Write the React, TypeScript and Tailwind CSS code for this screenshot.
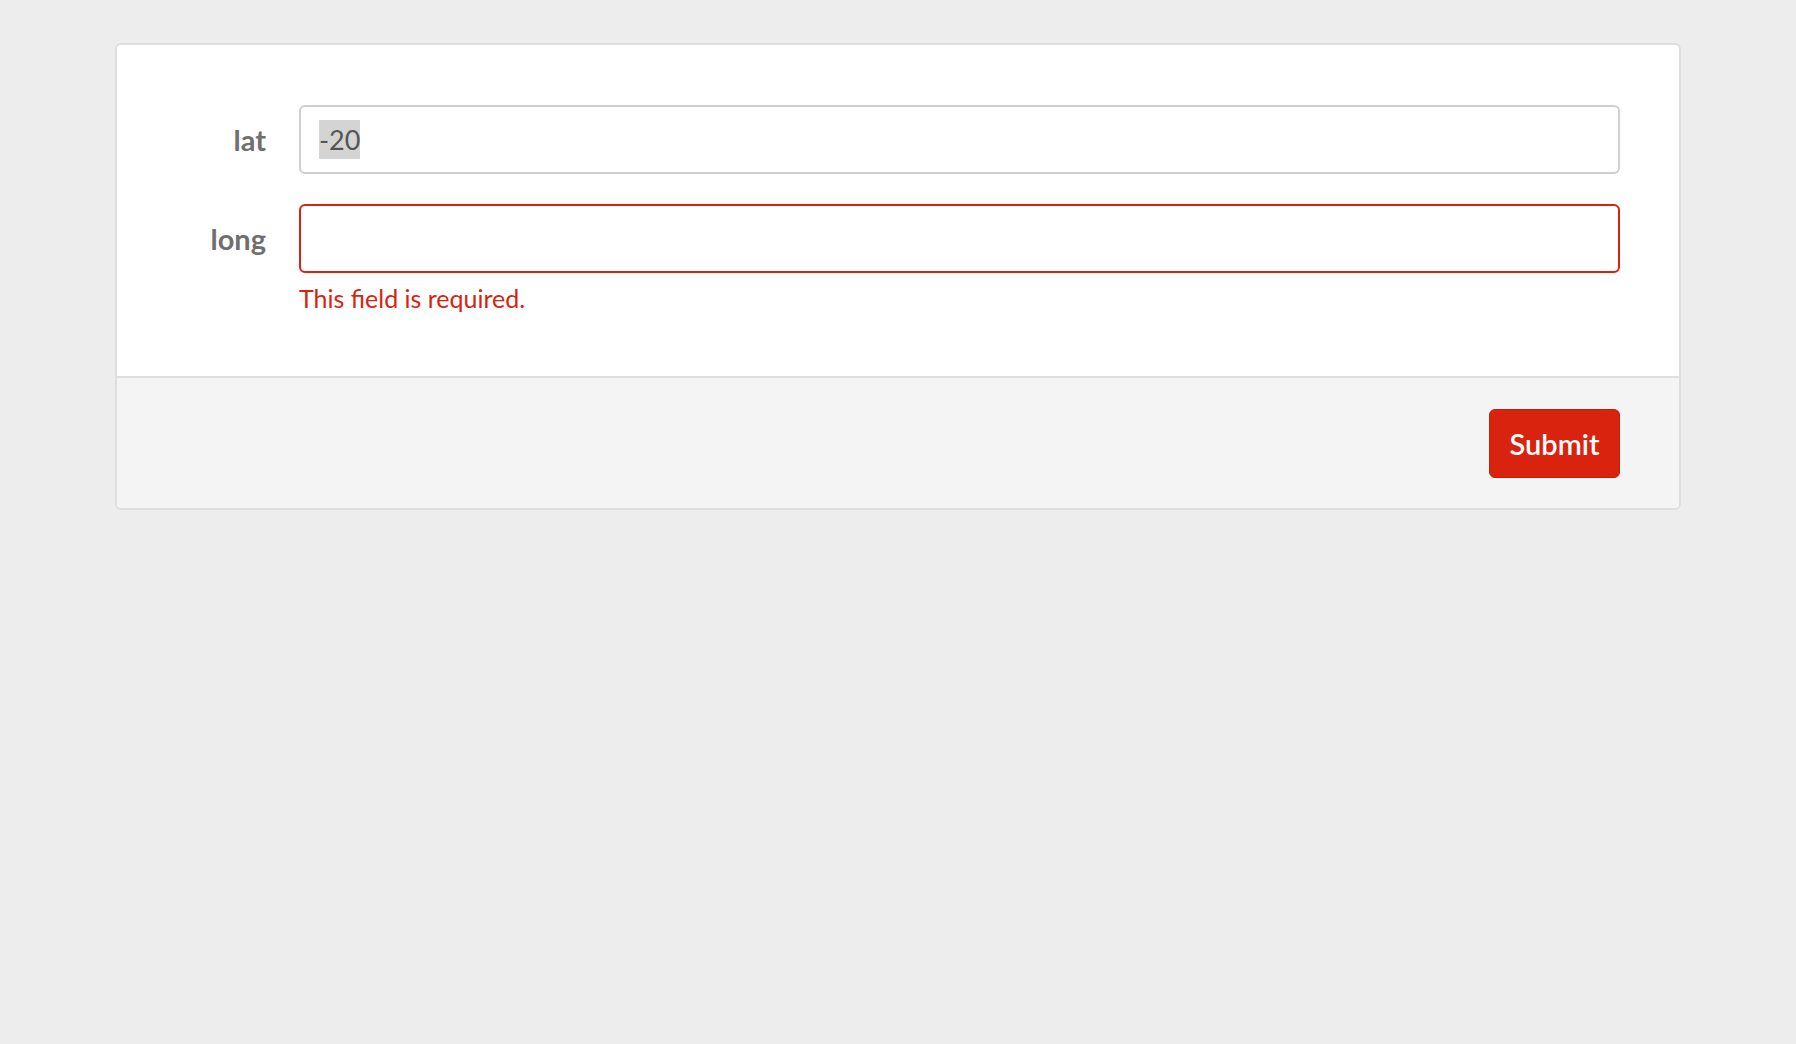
import React from 'react';

const font = { fontFamily: '"Lato", "Liberation Sans", sans-serif' };

export default function App() {
  return (
    <div className="min-h-screen bg-[#ededed] pt-[43px] pl-[115px]" style={font}>
      <div className="w-[1566px] rounded-[6px] border-2 border-[#dedede] bg-white overflow-hidden">
        {/* body */}
        <div className="pt-[60px] pb-[62px] pl-[58px] pr-[59px]">
          <div className="grid grid-cols-[91px_1fr] gap-x-[33px] gap-y-[30px] items-center">
            <label className="text-right text-[29px] font-bold text-[#6f6f6f]">lat</label>
            <div className="h-[69px] rounded-[6px] border-2 border-[#cfcfcf] flex items-center pl-[18px] text-[27px] text-[#555]">
              <span className="bg-[#d4d4d4] leading-[39px]">-20</span>
            </div>

            <label className="text-right text-[29px] font-bold text-[#6f6f6f]">long</label>
            <div className="h-[69px] rounded-[6px] border-2 border-[#d9230f]" />

            <div />
            <p className="-mt-[21px] text-[25px] leading-[32px] text-[#d9230f]">This field is required.</p>
          </div>
        </div>

        {/* footer */}
        <div className="border-t-2 border-[#dedede] bg-[#f4f4f4] flex justify-end pr-[59px] pt-[31px] pb-[30px]">
          <button className="h-[69px] w-[131px] rounded-[6px] bg-[#d9230f] border border-[#c21f0d] text-white text-[29px] font-semibold">
            Submit
          </button>
        </div>
      </div>
    </div>
  );
}
